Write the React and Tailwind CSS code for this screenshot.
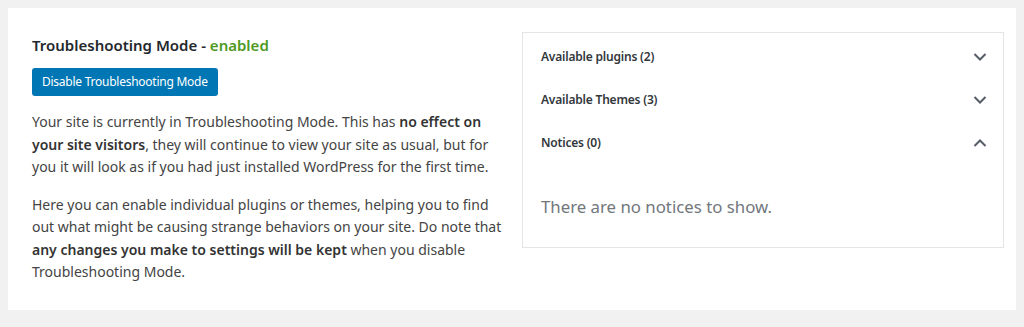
export default function App() {
  const Chevron = ({ up }) => (
    <svg width="14" height="8" viewBox="0 0 14 8" className="shrink-0">
      <path d={up ? "M1.5 7 L7 1.5 L12.5 7" : "M1.5 1 L7 6.5 L12.5 1"} fill="none" stroke="#555d66" strokeWidth="2" />
    </svg>
  );
  const Row = ({ label, up }) => (
    <div className="flex items-center justify-between h-[43px] pl-[18px] pr-[16px]">
      <span className="text-[12px] tracking-[-0.2px] font-semibold text-[#32373c]">{label}</span>
      <Chevron up={up} />
    </div>
  );
  return (
    <div className="w-[1024px] h-[327px] bg-[#f1f1f1] pt-2 pl-2 font-['Noto_Sans',sans-serif]">
      <div className="w-[1008px] h-[302px] bg-white flex pl-6 pr-3 pt-6">
        <div className="w-[478px] pt-[2px]">
          <h2 className="text-[15px] font-semibold text-[#23282d] leading-[22px]">
            Troubleshooting Mode - <span className="text-[#4e9a1f]">enabled</span>
          </h2>
          <button className="mt-[12px] h-[28px] px-[10px] rounded-[3px] bg-[#0076b4] text-white text-[12px] tracking-[-0.25px] leading-none">
            Disable Troubleshooting Mode
          </button>
          <p className="mt-[15px] text-[14px] leading-[22.5px] text-[#444]">
            Your site is currently in Troubleshooting Mode. This has <strong className="font-semibold text-[#333]">no effect on your site visitors</strong>, they will continue to view your site as usual, but for you it will look as if you had just installed WordPress for the first time.
          </p>
          <p className="mt-[15px] text-[14px] leading-[22.5px] text-[#444]">
            Here you can enable individual plugins or themes, helping you to find out what might be causing strange behaviors on your site. Do note that <strong className="font-semibold text-[#333]">any changes you make to settings will be kept</strong> when you disable Troubleshooting Mode.
          </p>
        </div>
        <div className="ml-[12px] w-[482px] h-[216px] border border-[#e5e5e5] pt-[2px]">
          <Row label="Available plugins (2)" />
          <Row label="Available Themes (3)" />
          <Row label="Notices (0)" up />
          <div className="pl-[18px] mt-[30px] text-[16.8px] text-[#72777c]">There are no notices to show.</div>
        </div>
      </div>
    </div>
  );
}
